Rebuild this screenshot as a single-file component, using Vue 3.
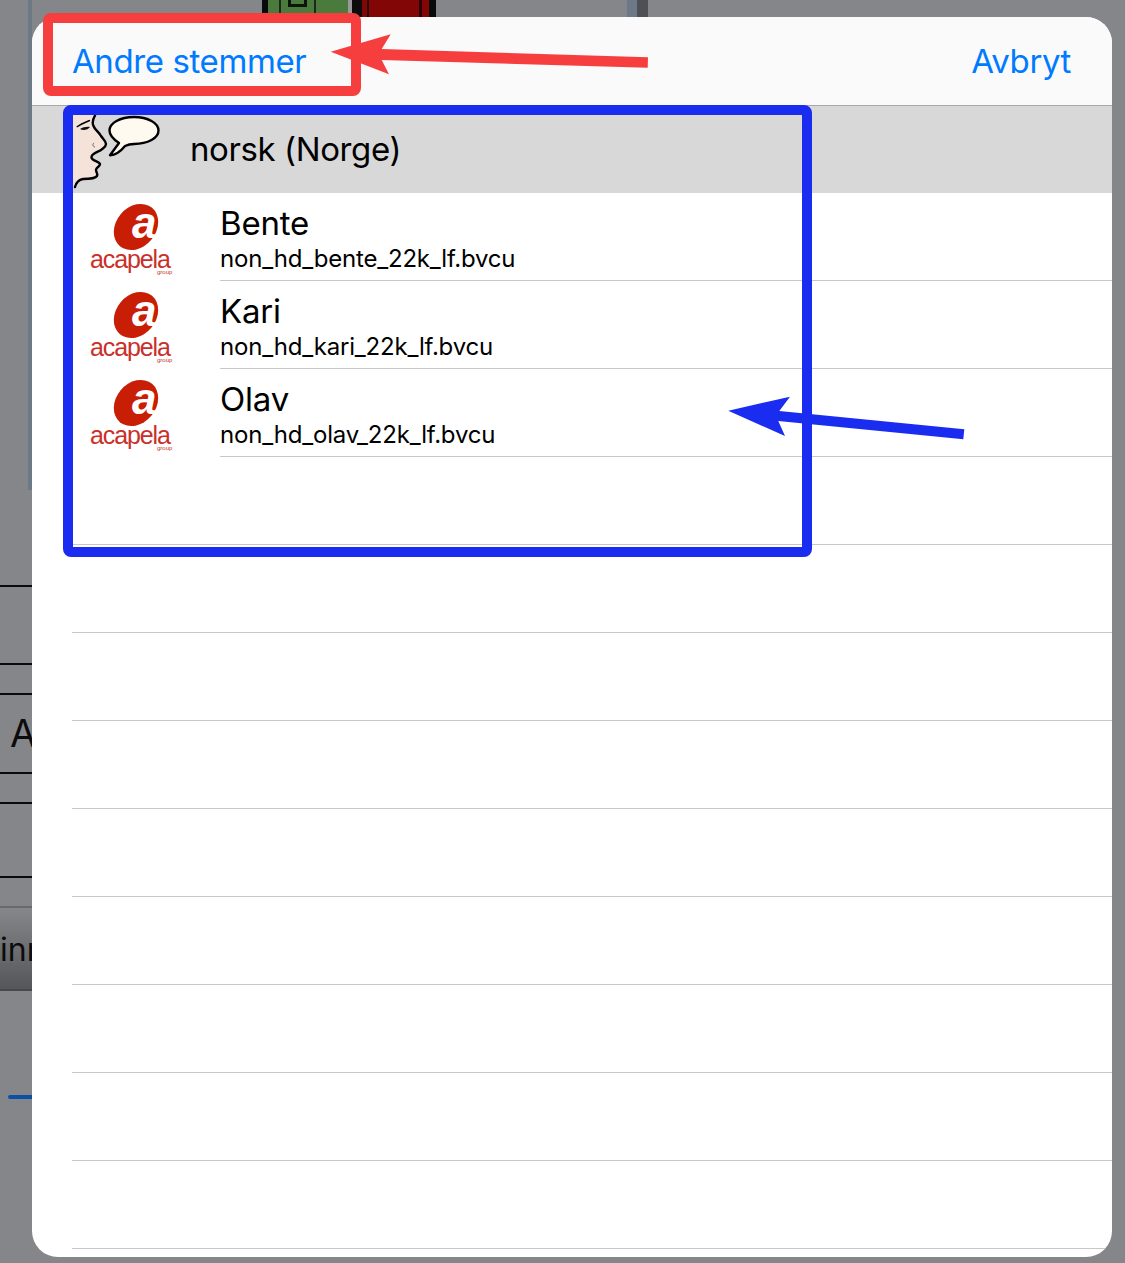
<script setup>
const voices = [
  { name: 'Bente', file: 'non_hd_bente_22k_lf.bvcu' },
  { name: 'Kari', file: 'non_hd_kari_22k_lf.bvcu' },
  { name: 'Olav', file: 'non_hd_olav_22k_lf.bvcu' }
]
const emptyRows = 9
const backLines = [
  { height: 76 },
  { height: 28 },
  { height: 77, text: 'A' },
  { height: 28 },
  { height: 72 },
  { height: 0 }
]
</script>

<template>
  <div class="page">
    <!-- dimmed screen behind the sheet -->
    <div class="back-top">
      <div class="tile"><span class="tile-square"></span></div>
      <div class="back-stripe"></div>
    </div>
    <div class="back-edge"></div>
    <div class="back-left">
      <div
        v-for="(line, i) in backLines"
        :key="i"
        class="back-line"
        :style="{ height: line.height + 'px' }"
      >
        {{ line.text }}
      </div>
      <div class="back-btn"><span>inn</span></div>
      <div class="back-progress"></div>
    </div>

    <div class="sheet">
      <header class="sheet-head">
        <a class="head-btn">Andre stemmer</a>
        <a class="head-btn">Avbryt</a>
      </header>

      <div class="lang-row">
        <svg class="speak-icon" width="88" height="74" viewBox="0 0 88 74">
          <path d="M0 0H22L20 10L25 17L33 29L29 34L19 42L19 45L27 49L24 56L24 60L20 64L7 64L2 72L0 74Z" fill="#f5e3da" />
          <path d="M22 0.5C20 4 19 8 20.5 11C22 15 25 16 28 21C30 24 33 26 33 29C33 32 30 33 28 35C25 37 19 38 18.5 42C18 46 26 46 27 49C27 52 23 52 23 55C23 57 25 59 24 61C22 64 15 64 10 64C5 65 3 68 2 72" fill="none" stroke="#000" stroke-width="2.4" stroke-linecap="round" />
          <path d="M3.7 12C8 9 13 7 17 5.3" fill="none" stroke="#000" stroke-width="1.4" />
          <path d="M7 14C10 12 14 11.5 17 12C15 15 10 16 7 14Z" fill="#111" />
          <path d="M21 28C19 29 20 32 22 32" fill="none" stroke="#666" stroke-width="1" />
          <path d="M37 40.3L46 28C40 24 36.5 20 36.5 15.5C36.5 8 47 2 61 2C75 2 85.5 8 85.5 15.5C85.5 23 75 29 61 29C57 29 55 29.5 52 31C48 36 42 40 37 40.3Z" fill="#fffaf0" stroke="#000" stroke-width="2.4" stroke-linejoin="round" />
        </svg>
        <span class="lang-name">norsk (Norge)</span>
      </div>

      <div v-for="voice in voices" :key="voice.name" class="voice-row">
        <div class="logo">
          <svg class="logo-mark" width="48" height="46" viewBox="0 0 48 46">
            <ellipse cx="23" cy="23" rx="25" ry="20" fill="#c81e06" transform="rotate(-50 23 23)" />
            <text x="19" y="34" class="logo-a">a</text>
          </svg>
          <span class="logo-name">acapela</span>
          <span class="logo-group">group</span>
        </div>
        <div class="voice-text">
          <div class="voice-name">{{ voice.name }}</div>
          <div class="voice-file">{{ voice.file }}</div>
        </div>
      </div>

      <div v-for="n in emptyRows" :key="n" class="empty-row"></div>
    </div>

    <!-- markup drawn on top of the screenshot -->
    <svg class="marks" width="1125" height="1263" viewBox="0 0 1125 1263">
      <rect x="48" y="18" width="308" height="73" rx="3" fill="none" stroke="#f63e3e" stroke-width="10" />
      <polygon points="330.7,51.7 390.7,34.3 381.7,49 648,57.3 647.7,67.7 381.7,60 389,74.3" fill="#f63e3e" />
      <rect x="68" y="110" width="739" height="442" rx="3" fill="none" stroke="#1a2cf0" stroke-width="10" />
      <polygon points="728.3,410.7 790,396.7 779.3,411 964.3,429.3 963.3,439.3 778.3,421 785,436" fill="#1a2cf0" />
    </svg>
  </div>
</template>

<style>
html,
body {
  background: #858689;
}
</style>

<style scoped>
.page {
  position: relative;
  width: 1125px;
  height: 1263px;
  overflow: hidden;
  background: #858689;
  font-family: Inter, "Liberation Sans", sans-serif;
  color: #000;
  padding-top: 17px;
  box-sizing: border-box;
}

.back-top {
  position: absolute;
  top: 0;
  left: 262px;
  display: flex;
  height: 17px;
}

.tile {
  width: 174px;
  padding-left: 26px;
  box-sizing: border-box;
  background: linear-gradient(
    90deg,
    #0a0a0a 0 6px,
    #4a7a3c 6px 17px,
    #1c2a1a 17px 19px,
    #4a7a3c 19px 52px,
    #1c2a1a 52px 54px,
    #4a7a3c 54px 86px,
    #9a9a9a 86px 90px,
    #0c0c0c 90px 100px,
    #820606 100px 105px,
    #2a0404 105px 107px,
    #820606 107px 157px,
    #2a0404 157px 160px,
    #820606 160px 167px,
    #0a0a0a 167px 174px
  );
}

.tile-square {
  display: block;
  width: 13px;
  height: 4px;
  border: 3px solid #0c140c;
  border-top: none;
}

.back-stripe {
  width: 10px;
  margin-left: 191px;
  background: #6c7a88;
  border-right: 11px solid #4f5054;
}

.back-edge {
  position: absolute;
  top: 0;
  left: 28px;
  width: 4px;
  height: 490px;
  background: #6c7a88;
}

.back-left {
  position: absolute;
  top: 585px;
  left: 0;
  width: 32px;
  overflow: hidden;
}

.back-line {
  border-top: 2px solid #0a0a0a;
  font-size: 38px;
  line-height: 76px;
  padding-left: 10px;
  color: #0c0c0c;
}

.back-btn {
  height: 81px;
  margin-top: 28px;
  border-top: 2px solid #6a6a6c;
  border-bottom: 2px solid #47484a;
  background: linear-gradient(#86878a, #55565a);
  font-size: 32px;
  line-height: 84px;
  color: #0c0c0c;
}

.back-progress {
  height: 4px;
  margin: 104px 0 0 8px;
  background: #0b4fa6;
  border-radius: 2px 0 0 2px;
}

.sheet {
  position: relative;
  width: 1080px;
  height: 1240px;
  margin-left: 32px;
  background: #fff;
  border-radius: 26px;
  overflow: hidden;
}

.sheet-head {
  display: flex;
  align-items: center;
  justify-content: space-between;
  height: 89px;
  padding: 0 41px 0 40px;
  box-sizing: border-box;
  background: #fafafa;
  border-bottom: 1px solid #a8a8a8;
}

.head-btn {
  font-size: 33px;
  letter-spacing: -0.4px;
  color: #007aff;
}

.lang-row {
  display: flex;
  align-items: center;
  height: 87px;
  padding-left: 41px;
  background: #d8d8d8;
}

.speak-icon {
  flex: none;
  margin-top: 9px;
  align-self: flex-start;
}

.lang-name {
  margin: -2px 0 0 29px;
  font-size: 33px;
  letter-spacing: -0.4px;
}

.voice-row {
  display: flex;
  height: 88px;
}

.logo {
  position: relative;
  flex: none;
  width: 148px;
  margin-left: 40px;
  height: 88px;
}

.logo-mark {
  position: absolute;
  top: 11px;
  left: 41px;
  overflow: visible;
}

.logo-a {
  font-family: "Liberation Sans", sans-serif;
  font-style: italic;
  font-weight: 700;
  font-size: 44px;
  fill: #fff;
}

.logo-name {
  position: absolute;
  top: 56px;
  left: 18px;
  font-family: "Liberation Sans", sans-serif;
  font-size: 25px;
  line-height: 20px;
  letter-spacing: -1.1px;
  color: #c9302a;
}

.logo-group {
  position: absolute;
  top: 76px;
  left: 85px;
  font-family: "Liberation Sans", sans-serif;
  font-size: 6px;
  line-height: 6px;
  color: #c9302a;
}

.voice-text {
  flex: 1;
  border-bottom: 1px solid #c8c7cc;
  padding-top: 10px;
}

.voice-name {
  font-size: 33px;
  letter-spacing: -0.2px;
  line-height: 41px;
}

.voice-file {
  font-size: 24px;
  letter-spacing: -0.2px;
  line-height: 30px;
}

.empty-row {
  height: 87px;
  margin-left: 40px;
  border-bottom: 1px solid #c8c7cc;
}

.marks {
  position: absolute;
  top: 0;
  left: 0;
}
</style>
